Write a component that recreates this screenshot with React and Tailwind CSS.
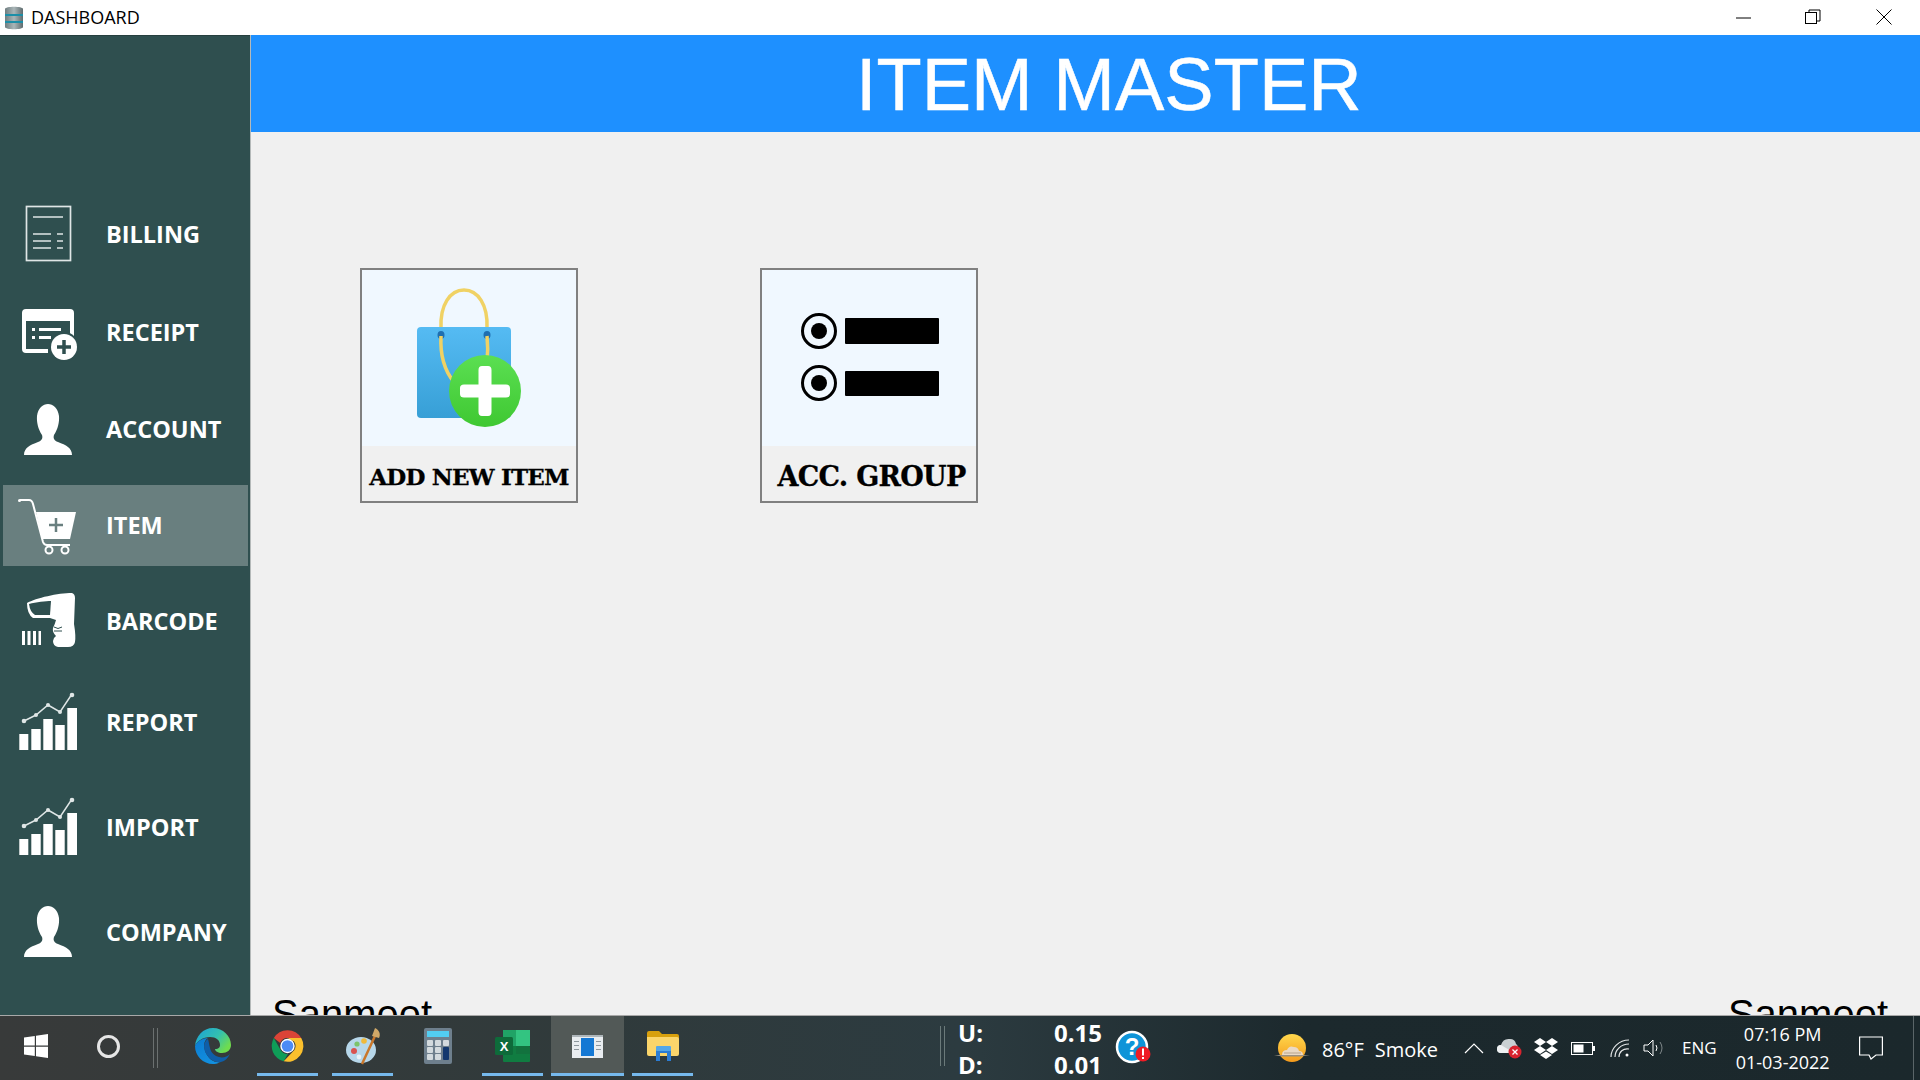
import React from "react";

const Person = ({ dy = 0 }) => (
  <path transform={`translate(0 ${dy})`} fill="#fff" d="M6 53C6 46 12 43 20 40C24 38.500 25 36 24 33C20 27 18.500 20 19 14C20 6 25 2 30 2C35 2 40 6 41 14C41.500 20 40 27 36 33C35 36 36 38.500 40 40C48 43 54 46 54 53Z" />
);

const Chart = () => (
  <g>
    <g fill="#fff">
      <rect x="1.300" y="41" width="9" height="16" />
      <rect x="13.300" y="36" width="9.400" height="21" />
      <rect x="25.300" y="26" width="9.400" height="31" />
      <rect x="37.300" y="32" width="9.400" height="25" />
      <rect x="49.300" y="15" width="9.700" height="42" />
    </g>
    <polyline points="6,28 18,22 30,12 42,19 54,1" fill="none" stroke="#dfe6e6" strokeWidth="1.500" />
    <g fill="#dfe6e6">
      <circle cx="6" cy="28" r="2.300" />
      <circle cx="18" cy="22" r="2" />
      <circle cx="30" cy="12" r="2" />
      <circle cx="42" cy="19" r="2" />
      <circle cx="54" cy="2" r="2.300" />
    </g>
  </g>
);

const icons = {
  billing: (
    <g fill="none" stroke="#dfe6e6" strokeWidth="1.700">
      <rect x="8.500" y="1.500" width="44" height="54" />
      <path d="M15 12H45M15 29H33M39 29H45M15 36H33M39 36H45M15 43H33M39 43H45" />
    </g>
  ),
  receipt: (
    <g>
      <path fill="#fff" fillRule="evenodd" d="M4 10Q4 6 8 6H52Q56 6 56 10V38H52V18H8V46H30V50H8Q4 50 4 46Z" />
      <g fill="#fff">
        <rect x="14" y="25" width="3" height="3" />
        <rect x="14" y="33" width="3" height="3" />
        <rect x="21" y="25" width="22" height="3" />
        <rect x="21" y="33" width="12" height="3" />
      </g>
      <circle cx="46" cy="44" r="15" fill="#2f4f4f" />
      <circle cx="46" cy="44" r="13" fill="#fff" />
      <path d="M46 37V51M39 44H53" stroke="#2f4f4f" strokeWidth="3.500" />
    </g>
  ),
  account: <Person dy={2} />,
  item: (
    <g>
      <path d="M2 4H11Q14 4 15 8L25 46Q26 49 29 49H52" fill="none" stroke="#fff" strokeWidth="2" />
      <circle cx="1.500" cy="4.500" r="1.500" fill="#fff" />
      <path fill="#fff" d="M18 16H58L52 43H24Z" />
      <path d="M38 22V36M31 29H45" stroke="#697f7f" strokeWidth="2.500" />
      <circle cx="31" cy="54" r="3.500" fill="none" stroke="#fff" strokeWidth="2" />
      <circle cx="47" cy="54" r="3.500" fill="none" stroke="#fff" strokeWidth="2" />
    </g>
  ),
  barcode: (
    <g fill="#fff">
      <path d="M9 11C18 6 40 1 54 1Q57 2 57 6L56 32Q58 44 57 50Q56 55 50 55H40Q35 54 35 49Q35 46 38 44Q34 40 35 36Q37 32 38 28L32 26H15Q9 22 9 11Z" />
      <path fill="#2f4f4f" d="M11 12C18 10 28 9 33 9L32 23H17Q12 20 11 12Z" />
      <path d="M36 35Q40 38 44 35M36 39H44" stroke="#2f4f4f" strokeWidth="1" fill="none" />
      <rect x="4" y="39" width="3" height="14" />
      <rect x="9.500" y="39" width="3" height="14" />
      <rect x="15" y="39" width="3" height="14" />
      <rect x="20.500" y="39" width="2.500" height="14" />
    </g>
  ),
  chart: <Chart />,
  company: <Person dy={1} />,
};

const menu = [
  { label: "BILLING", icon: "billing", cls: "mt-0" },
  { label: "RECEIPT", icon: "receipt", cls: "mt-[17px]" },
  { label: "ACCOUNT", icon: "account", cls: "mt-[16px]" },
  { label: "ITEM", icon: "item", cls: "mt-[15px] bg-[#697f7f]" },
  { label: "BARCODE", icon: "barcode", cls: "mt-[15px]" },
  { label: "REPORT", icon: "chart", cls: "mt-[20px]" },
  { label: "IMPORT", icon: "chart", cls: "mt-[24px]" },
  { label: "COMPANY", icon: "company", cls: "mt-[24px]" },
];

const TitleIcon = () => (
  <svg width="20" height="26" viewBox="0 0 20 26" className="ml-[4px]">
    <defs>
      <linearGradient id="db" x1="0" x2="1" y1="0" y2="0">
        <stop offset="0" stopColor="#6f7d80" />
        <stop offset="0.5" stopColor="#aab6b8" />
        <stop offset="1" stopColor="#5f6c6f" />
      </linearGradient>
    </defs>
    <path d="M1 4C1 1 19 1 19 4V22C19 25 1 25 1 22Z" fill="url(#db)" />
    <rect x="1" y="9" width="18" height="2" fill="#1c8fa8" />
    <rect x="1" y="16" width="18" height="2" fill="#1c8fa8" />
  </svg>
);

const BagIcon = () => (
  <svg className="block w-full h-[176px] bg-[#f0f8ff]" viewBox="0 0 214 176">
    <defs>
      <linearGradient id="bag" x1="0" x2="0" y1="0" y2="1">
        <stop offset="0" stopColor="#55bbf3" />
        <stop offset="1" stopColor="#379fd6" />
      </linearGradient>
      <linearGradient id="grn" x1="0" x2="0" y1="0" y2="1">
        <stop offset="0" stopColor="#5bdf52" />
        <stop offset="1" stopColor="#3fc832" />
      </linearGradient>
    </defs>
    <path d="M79 58C78 35 88 20 102 20C116 20 126 35 125 58" fill="none" stroke="#f0d264" strokeWidth="3.500" />
    <rect x="55" y="57" width="94" height="91" rx="4" fill="url(#bag)" />
    <ellipse cx="79" cy="65" rx="3.500" ry="4" fill="#1f6fb0" />
    <ellipse cx="125" cy="65" rx="3.500" ry="4" fill="#1f6fb0" />
    <path d="M79 66C78 85 82 100 92 112M125 66C126 75 126 82 125 92" fill="none" stroke="#f0d264" strokeWidth="3.500" />
    <circle cx="123" cy="121" r="36" fill="url(#grn)" />
    <path d="M116.500 100Q116.500 96 120 96H126Q129.500 96 129.500 100V114.500H144Q148 114.500 148 118V124Q148 127.500 144 127.500H129.500V142Q129.500 146 126 146H120Q116.500 146 116.500 142V127.500H102Q98 127.500 98 124V118Q98 114.500 102 114.500H116.500Z" fill="#fff" />
  </svg>
);

const RadioIcon = () => (
  <svg className="block w-full h-[176px] bg-[#f0f8ff]" viewBox="0 0 214 176">
    {[61, 113].map((y) => (
      <g key={y}>
        <circle cx="57" cy={y} r="16.500" fill="none" stroke="#000" strokeWidth="3" />
        <circle cx="57" cy={y} r="8" fill="#000" />
      </g>
    ))}
    <rect x="83" y="48" width="94" height="26" rx="1" fill="#000" />
    <rect x="83" y="101" width="94" height="25" rx="1" fill="#000" />
  </svg>
);

const WinIcon = () => (
  <svg width="24" height="24" viewBox="0 0 24 24">
    <path fill="#fff" d="M0 3.500L10.800 2V11.500H0ZM12 1.800L24 0V11.500H12ZM0 12.700H10.800V22L0 20.500ZM12 12.700H24V24L12 22.200Z" />
  </svg>
);

const Edge = () => (
  <svg width="36" height="36" viewBox="0 0 36 36">
    <defs>
      <linearGradient id="e1" x1="0" y1="0" x2="1" y2="0.600">
        <stop offset="0" stopColor="#1aa0d8" />
        <stop offset="0.6" stopColor="#33c0b0" />
        <stop offset="1" stopColor="#6fdc4e" />
      </linearGradient>
      <linearGradient id="e2" x1="0" y1="0" x2="0.600" y2="1">
        <stop offset="0" stopColor="#0c7bd0" />
        <stop offset="1" stopColor="#1290e0" />
      </linearGradient>
    </defs>
    <path fill="url(#e1)" d="M18 0C28 0 36 8 36 17C36 22 32 25 27 25C23 25 20 23 20 21C24 21 25 19 25 17C25 12 21 9 15 9C8 9 2 13 0 18C1 8 8 0 18 0Z" />
    <path fill="url(#e2)" d="M0 18C2 13 8 10 13 10C8 13 8 20 12 27C15 32 20 35 25 34C22 36 20 36 18 36C8 36 0 28 0 18Z" />
    <path fill="#0f5ea8" d="M13 11C8 14 8 21 12 27C15 32 21 35 26 34C30 33 33 30 35 26C32 29 28 30 24 29C20 28 16 25 15 20C14 17 14 14 13 11Z" />
  </svg>
);

const Chrome = () => (
  <svg width="33" height="34" viewBox="0 0 48 48">
    <path fill="#db4437" d="M24 1A23 23 0 0 1 44 12.500H24A11.500 11.500 0 0 0 13.400 19.500L4.100 12.500A23 23 0 0 1 24 1Z" />
    <path fill="#0f9d58" d="M4.100 12.500L14 29.800A11.500 11.500 0 0 0 24.500 35.500L18.500 46.300A23 23 0 0 1 4.100 12.500Z" />
    <path fill="#fbc02d" d="M44 12.500A23 23 0 0 1 18.500 46.300L34 29.800A11.500 11.500 0 0 0 33.500 17.500L24 12.500Z" />
    <circle cx="24" cy="24" r="10.500" fill="#fff" />
    <circle cx="24" cy="24" r="8.500" fill="#4c8bf5" />
  </svg>
);

const Palette = () => (
  <svg width="36" height="38" viewBox="0 0 36 38">
    <ellipse cx="16" cy="23" rx="15" ry="13" fill="#b7d7ea" />
    <circle cx="9" cy="24" r="3" fill="#d9534f" />
    <circle cx="12" cy="17" r="2.600" fill="#7dc36b" />
    <circle cx="19" cy="14" r="2.800" fill="#f0b93a" />
    <circle cx="14" cy="30" r="2.400" fill="#e8f3f8" />
    <path d="M17 37L30 9" stroke="#c9772b" strokeWidth="2.500" />
    <path d="M27 9L30 1C34 3 36 7 34 11Z" fill="#d0a868" />
  </svg>
);

const Calc = () => (
  <svg width="28" height="36" viewBox="0 0 28 36">
    <rect width="28" height="36" rx="2" fill="#6e7f8d" />
    <rect x="3" y="3" width="22" height="6" fill="#52cdf2" />
    {[12, 19, 26].map((y) =>
      [3, 11].map((x) => <rect key={`${x}${y}`} x={x} y={y} width="6" height="6" rx="1" fill="#d3dade" />)
    )}
    <rect x="19" y="12" width="6" height="6" rx="1" fill="#d3dade" />
    <rect x="19" y="19" width="6" height="13" rx="1" fill="#13386f" />
  </svg>
);

const Excel = () => (
  <svg width="35" height="32" viewBox="0 0 35 32">
    <rect x="8" y="0" width="13" height="16" fill="#20a366" />
    <rect x="21" y="0" width="14" height="16" fill="#33c481" />
    <rect x="8" y="16" width="27" height="16" rx="1" fill="#107c41" />
    <rect x="21" y="16" width="14" height="8" fill="#185c37" opacity="0.300" />
    <rect x="0" y="7" width="18" height="18" rx="1.500" fill="#0e6b3a" />
    <text x="9" y="21" textAnchor="middle" fill="#fff" fontSize="13" fontWeight="700" fontFamily="'Liberation Sans', sans-serif">X</text>
  </svg>
);

const AppWin = () => (
  <svg width="31" height="23" viewBox="0 0 31 23">
    <rect width="31" height="23" fill="#e9edf0" />
    <rect width="31" height="2" fill="#aeb6ba" />
    <rect x="9" y="3" width="13" height="18" fill="#1478d4" />
    <g fill="#8d979d">
      <rect x="2" y="6" width="5" height="1" />
      <rect x="2" y="10" width="5" height="1" />
      <rect x="2" y="14" width="5" height="1" />
      <rect x="24" y="6" width="5" height="1" />
      <rect x="24" y="10" width="5" height="1" />
      <rect x="24" y="14" width="5" height="1" />
    </g>
  </svg>
);

const Folder = () => (
  <svg width="32" height="30" viewBox="0 0 32 30">
    <path d="M0 2Q0 0 2 0H12L15 3H30Q32 3 32 5V10H0Z" fill="#d8a00d" />
    <path d="M0 6H30Q32 6 32 8V23Q32 25 30 25H2Q0 25 0 23Z" fill="#fbd56b" />
    <path d="M9 30V20Q9 17 12 17H21Q24 17 24 20V30H20V22H13V30Z" fill="#2b7cd3" />
    <rect x="9" y="15" width="15" height="5" rx="1" fill="#54a7e8" />
  </svg>
);

const apps = [
  { el: <Edge /> },
  { el: <Chrome />, line: true },
  { el: <Palette />, line: true },
  { el: <Calc /> },
  { el: <Excel />, line: true },
  { el: <AppWin />, line: true, active: true },
  { el: <Folder />, line: true },
];

const Help = () => (
  <svg width="38" height="36" viewBox="0 0 38 36">
    <circle cx="17" cy="17" r="15" fill="#0e94d8" stroke="#fff" strokeWidth="2.500" />
    <text x="17" y="25" textAnchor="middle" fill="#fff" fontSize="24" fontWeight="700" fontFamily="'Liberation Sans', sans-serif">?</text>
    <circle cx="28" cy="24" r="7.500" fill="#ee1c25" />
    <rect x="27" y="18.500" width="2" height="7" fill="#fff" />
    <rect x="27" y="27" width="2" height="2" fill="#fff" />
  </svg>
);

const Weather = () => (
  <svg width="36" height="30" viewBox="0 0 36 30">
    <defs>
      <linearGradient id="sun" x1="0" x2="0" y1="0" y2="1">
        <stop offset="0" stopColor="#ffd84d" />
        <stop offset="1" stopColor="#f59b1c" />
      </linearGradient>
    </defs>
    <circle cx="18" cy="15" r="14" fill="url(#sun)" />
    <path d="M0 22H36L26 23.500H8Z" fill="#9a9080" />
    <path d="M8 22Q8 17 13 17Q15 12 20 14Q24 14 25 18Q29 18 29 22Z" fill="#ead9c4" />
    <path d="M10 20H27" stroke="#b8a48c" strokeWidth="1" />
  </svg>
);

const Tray = {
  Chevron: () => (
    <svg width="20" height="12" viewBox="0 0 20 12"><path d="M1 11L10 2L19 11" fill="none" stroke="#fff" strokeWidth="1.200" /></svg>
  ),
  Cloud: () => (
    <svg width="26" height="22" viewBox="0 0 26 22">
      <path d="M4 16Q0 16 0 12Q0 8 4 8Q6 1 13 2Q18 2 19 7Q21 8 21 12V16Z" fill="#c9d0d2" />
      <path d="M4 16Q0 16 0 12Q0 8 4 8L14 14V16Z" fill="#eef1f2" />
      <circle cx="18" cy="15" r="6.500" fill="#d9232e" />
      <path d="M15.500 12.500L20.500 17.500M20.500 12.500L15.500 17.500" stroke="#fff" strokeWidth="1.300" />
    </svg>
  ),
  Dropbox: () => (
    <svg width="24" height="21" viewBox="0 0 24 21" fill="#fff">
      <path d="M6 0L12 4L6 8L0 4ZM18 0L24 4L18 8L12 4ZM0 12L6 8L12 12L6 16ZM18 8L24 12L18 16L12 12ZM6 17L12 13.500L18 17L12 21Z" />
    </svg>
  ),
  Battery: () => (
    <svg width="24" height="13" viewBox="0 0 24 13">
      <rect x="0.500" y="0.500" width="21" height="12" fill="none" stroke="#fff" />
      <rect x="2.500" y="2.500" width="10" height="8" fill="#fff" />
      <rect x="22" y="4" width="2" height="5" fill="#fff" />
    </svg>
  ),
  Wifi: () => (
    <svg width="20" height="18" viewBox="0 0 20 18" fill="none" stroke="#e3e6e7" strokeWidth="1.200">
      <path d="M1 18C1 9 9 1 19 1M5 18C5 11 11 5 19 5M9 18C9 13 13 9 19 10" />
      <circle cx="17" cy="16" r="1.500" fill="#fff" stroke="none" />
    </svg>
  ),
  Speaker: () => (
    <svg width="22" height="18" viewBox="0 0 22 18" fill="none" stroke="#fff" strokeWidth="1">
      <path d="M1 6H5L10 1V17L5 12H1Z" />
      <path d="M13 6Q15 9 13 12" />
      <path d="M17 3Q21 9 17 15" stroke="#7f8789" />
    </svg>
  ),
  Note: () => (
    <svg width="24" height="24" viewBox="0 0 24 24" fill="none" stroke="#fff" strokeWidth="1.200">
      <path d="M0.600 1H23.400V19H17L12 23L10 19H0.600Z" />
    </svg>
  ),
};

const F = "font-['Open_Sans','Noto_Sans',sans-serif]";

export default function App() {
  return (
    <div className={`w-[1920px] h-[1080px] overflow-hidden flex flex-col bg-[#f0f0f0] ${F}`}>
      <div className="h-[35px] shrink-0 bg-white flex items-center">
        <TitleIcon />
        <span className="ml-[7px] text-[18px] text-black">DASHBOARD</span>
        <div className="ml-auto flex items-center pb-[2px]">
          <svg width="16" height="16" viewBox="0 0 16 16" className="mr-[53px]"><path d="M0 9H15" stroke="#000" strokeWidth="1" /></svg>
          <svg width="16" height="16" viewBox="0 0 16 16" className="mr-[55px]" fill="none" stroke="#000"><rect x="0.500" y="3.500" width="11" height="11" /><path d="M4 3V1H15V12H12" /></svg>
          <svg width="16" height="16" viewBox="0 0 16 16" className="mr-[28px]"><path d="M0.500 0.500L15.500 15.500M15.500 0.500L0.500 15.500" stroke="#000" /></svg>
        </div>
      </div>

      <div className="h-[981px] shrink-0 flex border-b border-[#a8a8a8]">
        <aside className="w-[250px] shrink-0 bg-[#2f4f4f] pt-[158px] border-t border-t-[#263f3f]">
          {menu.map((m) => (
            <div key={m.label} className={`ml-[3px] w-[245px] h-[81px] flex items-center ${m.cls}`}>
              <svg width="60" height="60" viewBox="0 0 60 60" className="ml-[15px] shrink-0 overflow-visible">
                {icons[m.icon]}
              </svg>
              <span className="ml-[28px] text-[23.500px] leading-none font-bold text-white">{m.label}</span>
            </div>
          ))}
        </aside>
        <div className="w-px bg-[#b4b9b9] shrink-0" />
        <main className="flex-1 flex flex-col overflow-hidden">
          <header className="h-[97px] shrink-0 bg-[#1e90ff] flex items-center pl-[605px] pt-[2px]">
            <h1 className="text-[74px] leading-none font-normal text-white font-['Liberation_Sans',Arial,sans-serif] [-webkit-text-stroke:0.5px_white]">ITEM MASTER</h1>
          </header>
          <section className="flex-1 overflow-hidden pt-[136px]">
            <div className="flex gap-[182px] pl-[109px]">
              <div className="w-[218px] h-[235px] border-2 border-[#808080] flex flex-col">
                <BagIcon />
                <div className="flex-1 flex items-center justify-center pt-[7px] font-['DejaVu_Serif',serif] font-bold text-[23px] text-black whitespace-nowrap tracking-[-0.8px] [-webkit-text-stroke:0.3px_black]">ADD NEW ITEM</div>
              </div>
              <div className="w-[218px] h-[235px] border-2 border-[#808080] flex flex-col">
                <RadioIcon />
                <div className="flex-1 flex items-center justify-center pl-[5px] pt-[8px] font-['DejaVu_Serif',serif] font-bold text-[27px] text-black whitespace-nowrap tracking-[-0.7px] [-webkit-text-stroke:0.3px_black]">ACC. GROUP</div>
              </div>
            </div>
            <div className="mt-[488px] flex justify-between pl-[21px] pr-[32px] font-['Liberation_Sans',Arial,sans-serif] text-[40px] leading-[46px] text-black">
              <span>Sanmeet</span>
              <span>Sanmeet</span>
            </div>
          </section>
        </main>
      </div>

      <div className="h-[64px] shrink-0 flex items-stretch text-white bg-[linear-gradient(90deg,#383a3a_0%,#303a3b_30%,#2c3b40_50%,#1c292d_68%,#1b282c_100%)]">
        <div className="w-[72px] flex items-center justify-center pb-[4px]"><WinIcon /></div>
        <div className="w-[72px] flex items-center justify-center pb-[4px]">
          <div className="w-[23px] h-[23px] rounded-full border-[3px] border-[#e6e6e6]" />
        </div>
        <div className="w-[31px] flex items-center pl-[9px] gap-[3px]">
          <div className="w-px h-[40px] bg-[#6b7070]" />
          <div className="w-px h-[40px] bg-[#6b7070]" />
        </div>
        {apps.map((a, i) => (
          <div key={i} className="w-[75px] relative flex items-center justify-center pb-[4px]">
            {a.active && <div className="absolute left-[1px] right-[1px] top-0 bottom-[4px] bg-[#525957]" />}
            <div className="relative">{a.el}</div>
            {a.line && (
              <div className={`absolute bottom-[4px] h-[3px] bg-[#76b9ed] ${a.active ? "left-[1px] right-[1px]" : "left-[7px] right-[7px]"}`} />
            )}
          </div>
        ))}
        <div className="ml-[240px] flex items-center gap-[3px] pb-[4px]">
          <div className="w-px h-[40px] bg-[#6b7a7a]" />
          <div className="w-px h-[40px] bg-[#6b7a7a]" />
        </div>
        <div className="ml-[13px] w-[144px] flex flex-col justify-center text-[24px] font-bold leading-[32px] pt-[1px]">
          <div className="flex justify-between"><span>U:</span><span>0.15</span></div>
          <div className="flex justify-between"><span>D:</span><span>0.01</span></div>
        </div>
        <div className="ml-[13px] flex items-center pb-[1px]"><Help /></div>
        <div className="ml-[121px] flex items-center"><Weather /></div>
        <div className="ml-[12px] flex items-center text-[20px] whitespace-nowrap gap-[11px] pt-[3px]">
          <span>86°F</span><span>Smoke</span>
        </div>
        <div className="ml-[26px] flex items-center"><Tray.Chevron /></div>
        <div className="ml-[13px] flex items-center"><Tray.Cloud /></div>
        <div className="ml-[11px] flex items-center"><Tray.Dropbox /></div>
        <div className="ml-[13px] flex items-center"><Tray.Battery /></div>
        <div className="ml-[15px] flex items-center"><Tray.Wifi /></div>
        <div className="ml-[13px] flex items-center"><Tray.Speaker /></div>
        <div className="ml-[17px] flex items-center text-[17px]">ENG</div>
        <div className="ml-[18px] w-[96px] flex flex-col items-center justify-center text-[18px] leading-[28px] whitespace-nowrap">
          <span>07:16 PM</span><span>01-03-2022</span>
        </div>
        <div className="ml-[28px] flex items-center"><Tray.Note /></div>
        <div className="ml-auto mr-[6px] w-px bg-[#5a6568]" />
      </div>
    </div>
  );
}
